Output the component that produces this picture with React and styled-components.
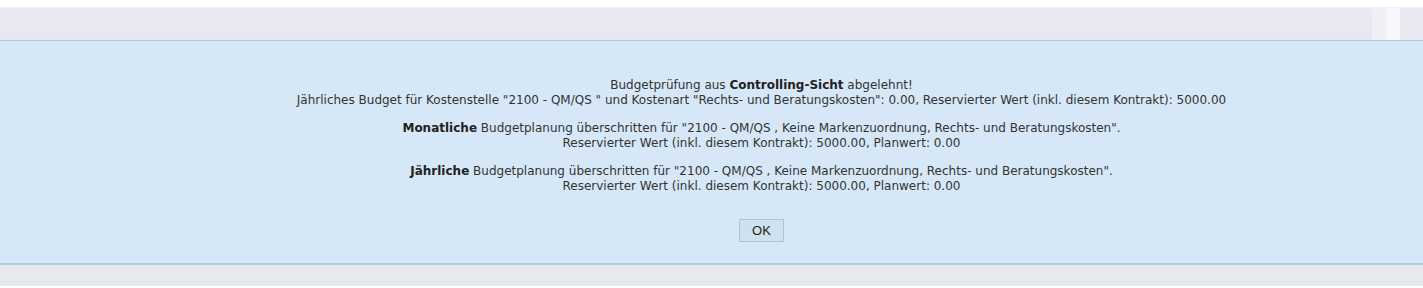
import React from 'react';
import styled, { createGlobalStyle } from 'styled-components';

const Global = createGlobalStyle`
    html, body {
        margin: 0;
        padding: 0;
        background: #ffffff;
    }
`

const Page = styled.div`
    width: 1423px;
    height: 288px;
    padding-top: 7px;
    box-sizing: border-box;
    display: flex;
    flex-direction: column;
    font-family: "DejaVu Sans", Verdana, sans-serif;
`

const TopBar = styled.div`
    height: 33px;
    display: flex;
    background: linear-gradient(#e8eaf3, #e8e7f1);
    border-top: 1px solid #eef0f6;
    box-sizing: border-box;
`

const Filler = styled.div`
    flex: 1;
`

const Strip = styled.div`
    width: ${props => props.w}px;
    background: ${props => props.bg};
`

const Panel = styled.div`
    height: 225px;
    box-sizing: border-box;
    background: #d6e8f7;
    border-top: 1px solid #b5c7d4;
    border-bottom: 2px solid #aecde0;
    box-shadow: inset 0 1px 0 #cfe9f7;
    display: flex;
    flex-direction: column;
    align-items: center;
    padding: 37px 0 0 100px;
`

const Message = styled.div`
    font-size: 12px;
    line-height: 15px;
    color: #333333;
    text-align: center;
    white-space: nowrap;

    b {
        font-weight: bold;
        color: #222222;
    }
`

const Block = styled.p`
    margin: 0 0 13px 0;
`

const OkButton = styled.button`
    margin-top: 12px;
    width: 45px;
    height: 23px;
    background: #cfe1ef;
    border: 1px solid #a9c5d9;
    border-radius: 0;
    font-family: "Liberation Sans", Arial, sans-serif;
    font-size: 13px;
    color: #222;
    padding: 0;
    cursor: pointer;
`

const Bottom = styled.div`
    height: 21px;
    background: #e6eaec;
`

function App() {
    return (
        <Page>
            <Global />
            <TopBar>
                <Filler />
                <Strip w={14} bg="#eef0f4" />
                <Strip w={14} bg="#f6f7fa" />
                <Strip w={23} bg="#e8e9f1" />
            </TopBar>
            <Panel>
                <Message>
                    <Block>
                        Budgetprüfung aus <b>Controlling-Sicht</b> abgelehnt!<br />
                        Jährliches Budget für Kostenstelle "2100 - QM/QS " und Kostenart "Rechts- und Beratungskosten": 0.00, Reservierter Wert (inkl. diesem Kontrakt): 5000.00
                    </Block>
                    <Block>
                        <b>Monatliche</b> Budgetplanung überschritten für "2100 - QM/QS , Keine Markenzuordnung, Rechts- und Beratungskosten".<br />
                        Reservierter Wert (inkl. diesem Kontrakt): 5000.00, Planwert: 0.00
                    </Block>
                    <Block>
                        <b>Jährliche</b> Budgetplanung überschritten für "2100 - QM/QS , Keine Markenzuordnung, Rechts- und Beratungskosten".<br />
                        Reservierter Wert (inkl. diesem Kontrakt): 5000.00, Planwert: 0.00
                    </Block>
                </Message>
                <OkButton>OK</OkButton>
            </Panel>
            <Bottom />
        </Page>
    )
}

export default App;
